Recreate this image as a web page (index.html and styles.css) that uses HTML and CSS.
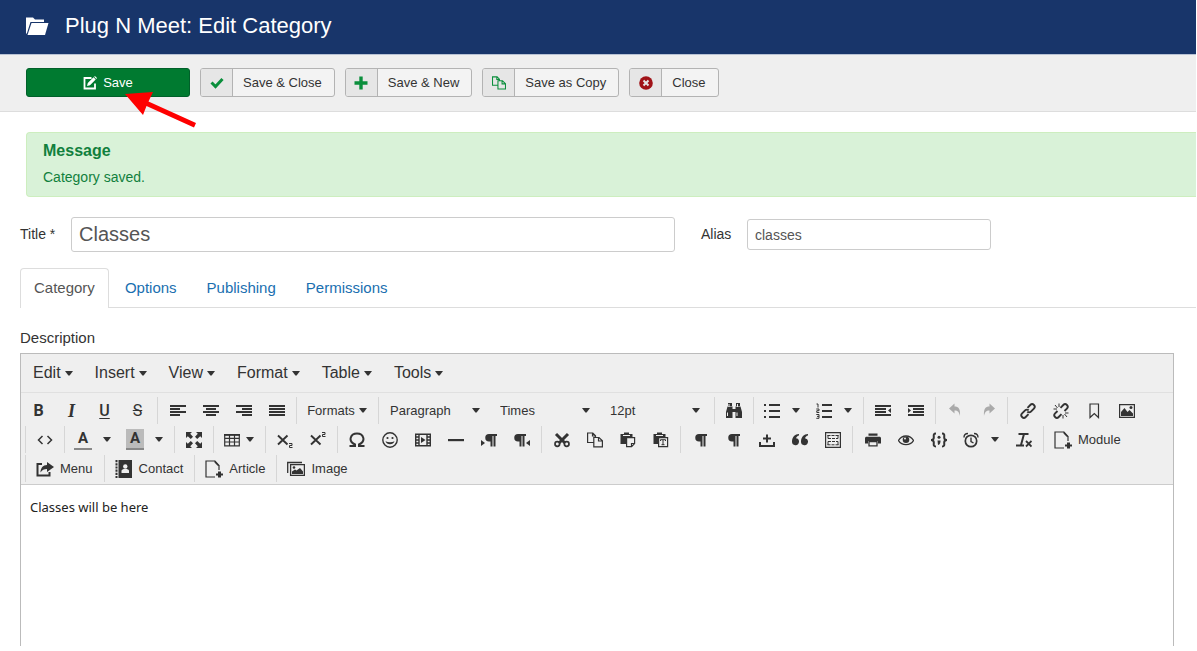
FILE: index.html
```html
<!DOCTYPE html>
<html lang="en">
<head>
<meta charset="utf-8">
<title>Plug N Meet: Edit Category</title>
<link rel="stylesheet" href="styles.css">
</head>
<body>
<svg class="sprite" aria-hidden="true">
  <symbol id="caret" viewBox="0 0 8 5"><path d="M0 0h8L4.600 4.400h-1.200z"/></symbol>
  <symbol id="file-add" viewBox="0 0 18 18"><path d="M14 10V5.500L10 1H1v16h9" fill="none" stroke="currentColor" stroke-width="1.200"/><path d="M9.500 .5l5 5.300h-1.800L9.500 2.500zM13 11.500h3v2h2v2h-2v2h-3v-2h-2v-2h2z"/></symbol>
  <symbol id="copy" viewBox="0 0 16 16"><path d="M6.500 10.500H.6V1h5.200l2.700 2.700V5M5.500 1v3h3M6.800 5.500H12l3.400 3.200v6.200H6.800zM11.500 5.500v3.500h4" fill="none" stroke="currentColor" stroke-width="1.200"/></symbol>
  <symbol id="pilcrow" viewBox="0 0 16 16"><path d="M6 2h8v2h-1.500v10.500h-2V4H9.500v10.500h-2V9.500H6a3.700 3.700 0 0 1 0-7.500z"/></symbol>
</svg>

<header class="header">
  <svg class="header-icon" viewBox="0 0 24 20" aria-hidden="true"><path d="M1 18V1.500h7l2 2h9V6H5.500L2 17z"/><path d="M6.500 7H23.500L20 19H2.500z"/></svg>
  <h1>Plug N Meet: Edit Category</h1>
</header>

<div class="actions">
  <div class="save-wrap">
    <button class="btn btn-save" type="button"><svg class="icon14" viewBox="0 0 14 14" aria-hidden="true"><path d="M8.500 2H1.500v10.500H12V7.500" fill="none" stroke="currentColor" stroke-width="1.800"/><path d="M4 10l.8-3L10.500 1.300 12.700 3.500 7 9.200zM11.200 .7l.7-.7L14 2.100l-.7.8z"/></svg>Save</button>
    <svg class="pointer" viewBox="0 0 72 36" aria-hidden="true"><path d="M0 2L28 0l-4.500 9.500L71 31l-2 4.500L21.500 14 18 23z"/></svg>
  </div>
  <button class="btn" type="button"><span class="btn-icon green"><svg class="icon14" viewBox="0 0 14 14" aria-hidden="true"><path d="M1.500 6.500l4 4L12.500 3" fill="none" stroke="currentColor" stroke-width="3"/></svg></span><span class="btn-text">Save &amp; Close</span></button>
  <button class="btn" type="button"><span class="btn-icon green"><svg class="icon14" viewBox="0 0 14 14" aria-hidden="true"><path d="M5.300 .5h3.400v4.800h4.800v3.400H8.700v4.800H5.300V8.700H.5V5.300h4.800z"/></svg></span><span class="btn-text">Save &amp; New</span></button>
  <button class="btn" type="button"><span class="btn-icon green"><svg class="icon14" aria-hidden="true"><use href="#copy"/></svg></span><span class="btn-text">Save as Copy</span></button>
  <button class="btn" type="button"><span class="btn-icon red"><svg class="icon14" viewBox="0 0 14 14" aria-hidden="true"><circle cx="7" cy="7" r="6.800"/><path d="M4.500 4.500l5 5m0-5l-5 5" stroke="#e6e6e6" stroke-width="2"/></svg></span><span class="btn-text">Close</span></button>
</div>

<main>
  <section class="alert" role="status">
    <h2>Message</h2>
    <p>Category saved.</p>
  </section>

  <form class="fields">
    <label for="title">Title *</label>
    <input class="input-large" id="title" type="text" value="Classes">
    <label class="alias-label" for="alias">Alias</label>
    <input id="alias" type="text" value="classes">
  </form>

  <nav class="tabs">
    <a class="active" href="#category">Category</a>
    <a href="#options">Options</a>
    <a href="#publishing">Publishing</a>
    <a href="#permissions">Permissions</a>
  </nav>

  <section class="description" id="category">
    <h3>Description</h3>
    <div class="editor">
      <div class="menubar">
        <button type="button">Edit<svg class="caret"><use href="#caret"/></svg></button>
        <button type="button">Insert<svg class="caret"><use href="#caret"/></svg></button>
        <button type="button">View<svg class="caret"><use href="#caret"/></svg></button>
        <button type="button">Format<svg class="caret"><use href="#caret"/></svg></button>
        <button type="button">Table<svg class="caret"><use href="#caret"/></svg></button>
        <button type="button">Tools<svg class="caret"><use href="#caret"/></svg></button>
      </div>
      <div class="toolbar">
        <div class="row row-first">
          <div class="group wide">
            <button type="button" aria-label="Bold"><b class="letter">B</b></button>
            <button type="button" aria-label="Italic"><i class="letter serif">I</i></button>
            <button type="button" aria-label="Underline"><span class="letter under">U</span></button>
            <button type="button" aria-label="Strikethrough"><span class="letter strike">S</span></button>
          </div>
          <div class="group wide">
            <button type="button" aria-label="Align left"><svg viewBox="0 0 16 16"><path d="M0 2h16v2H0zM0 5h10v2H0zM0 8h16v2H0zM0 11h10v2H0z"/></svg></button>
            <button type="button" aria-label="Align center"><svg viewBox="0 0 16 16"><path d="M0 2h16v2H0zM3 5h10v2H3zM0 8h16v2H0zM3 11h10v2H3z"/></svg></button>
            <button type="button" aria-label="Align right"><svg viewBox="0 0 16 16"><path d="M0 2h16v2H0zM6 5h10v2H6zM0 8h16v2H0zM6 11h10v2H6z"/></svg></button>
            <button type="button" aria-label="Justify"><svg viewBox="0 0 16 16"><path d="M0 2h16v2H0zM0 5h16v2H0zM0 8h16v2H0zM0 11h16v2H0z"/></svg></button>
          </div>
          <div class="group">
            <button class="formats" type="button">Formats<svg class="caret"><use href="#caret"/></svg></button>
          </div>
          <div class="group">
            <div class="list"><select aria-label="Block format"><option>Paragraph</option></select><svg class="caret"><use href="#caret"/></svg></div>
            <div class="list"><select aria-label="Font family"><option>Times</option></select><svg class="caret"><use href="#caret"/></svg></div>
            <div class="list"><select aria-label="Font size"><option>12pt</option></select><svg class="caret"><use href="#caret"/></svg></div>
          </div>
          <div class="group">
            <button type="button" aria-label="Find and replace"><svg viewBox="0 0 16 16"><path d="M2 0h4v3H2zM10 0h4v3h-4zM1.500 3.500h5V6h3V3.500h5L16 9v6H9.500V9h-3v6H0V9z"/><path d="M1.500 9.500V13M11 9.500V13M3 1v3M11.500 1v3" stroke="#efefef"/></svg></button>
          </div>
          <div class="group">
            <button class="split" type="button" aria-label="Bullet list"><svg viewBox="0 0 16 16"><path d="M5 1h11v2H5zM5 7h11v2H5zM5 13h11v2H5zM0 1h2v2H0zM0 7h2v2H0zM0 13h2v2H0z"/></svg><svg class="caret"><use href="#caret"/></svg></button>
            <button class="split" type="button" aria-label="Numbered list"><svg viewBox="0 0 16 16"><path d="M6 1h10v2H6zM6 7h10v2H6zM6 13h10v2H6z"/><path d="M.5 1H2v3.500M.3 6H3v1.700H.8v1.800H3.300M.3 11.500H3v3.800H.3M1 13.400h2" fill="none" stroke="currentColor"/></svg><svg class="caret"><use href="#caret"/></svg></button>
          </div>
          <div class="group">
            <button type="button" aria-label="Outdent"><svg viewBox="0 0 16 16"><path d="M0 2h16v2H0zM0 5h11v2H0zM0 8h11v2H0zM0 11h16v2H0zM16 5v5l-3-2.500z"/></svg></button>
            <button type="button" aria-label="Indent"><svg viewBox="0 0 16 16"><path d="M0 2h16v2H0zM5 5h11v2H5zM5 8h11v2H5zM0 11h16v2H0zM0 5v5l3-2.500z"/></svg></button>
          </div>
          <div class="group">
            <button class="muted" type="button" aria-label="Undo"><svg viewBox="0 0 16 16"><path d="M2 5.500L7.500 .5v3c4 0 6 2 5.500 9.500C12 9 11 7.500 7.500 7.500v3z"/></svg></button>
            <button class="muted" type="button" aria-label="Redo"><svg viewBox="0 0 16 16"><path d="M15 5.500L9.500 .5v3c-4 0-6 2-5.500 9.500C5 9 6 7.500 9.500 7.500v3z"/></svg></button>
          </div>
          <div class="group wide">
            <button type="button" aria-label="Insert link"><svg viewBox="0 0 16 16"><path d="M7.500 4.800L10.300 2a2.500 2.500 0 0 1 3.600 3.600l-3 3a2.500 2.500 0 0 1-3.600 0M8.500 11.200L5.700 14a2.500 2.500 0 0 1-3.600-3.600l3-3a2.500 2.500 0 0 1 3.600 0" fill="none" stroke="currentColor" stroke-width="1.900"/></svg></button>
            <button type="button" aria-label="Remove link"><svg viewBox="0 0 16 16"><path d="M7.500 4.800L10.300 2a2.500 2.500 0 0 1 3.600 3.600L11.500 8M8.500 11.200L5.700 14a2.500 2.500 0 0 1-3.600-3.600L4.500 8" fill="none" stroke="currentColor" stroke-width="1.900"/><path d="M6 .5V4M2 2l2.500 3M.5 6H4M10 12v3.500M11.500 11l2.500 3M12 10h3.500" stroke="currentColor"/></svg></button>
            <button type="button" aria-label="Anchor"><svg viewBox="0 0 16 16"><path d="M4 1h8.500v13.500L8.300 10.500 4 14.500z" fill="none" stroke="currentColor" stroke-width="1.200"/></svg></button>
            <button type="button" aria-label="Insert image"><svg viewBox="0 0 16 16"><path d="M.6 1.600h14.800v12.800H.6z" fill="none" stroke="currentColor" stroke-width="1.200"/><path d="M2 13V9l3.500-4L8.500 9 10.500 7l3.500 3.500V13z"/><circle cx="12" cy="4.500" r="1.500"/></svg></button>
          </div>
        </div>

        <div class="row">
          <div class="group">
            <button type="button" aria-label="Source code"><svg viewBox="0 0 16 16"><path d="M5.500 4L1.500 8l4 4M10.500 4l4 4-4 4" fill="none" stroke="currentColor" stroke-width="1.500"/></svg></button>
          </div>
          <div class="group">
            <button class="split" type="button" aria-label="Text color"><b class="swatch">A</b><svg class="caret"><use href="#caret"/></svg></button>
            <button class="split" type="button" aria-label="Background color"><b class="swatch fill">A</b><svg class="caret"><use href="#caret"/></svg></button>
          </div>
          <div class="group">
            <button type="button" aria-label="Fullscreen"><svg viewBox="0 0 16 16"><path d="M0 0h6L4.200 1.800 7 4.800 4.800 7 1.800 4.200 0 6zM16 0h-6l1.800 1.800L9 4.800 11.200 7l3-2.800L16 6zM0 16h6l-1.800-1.800L7 11.200 4.800 9l-3 2.800L0 10zM16 16h-6l1.800-1.800L9 11.200 11.200 9l3 2.800L16 10z"/></svg></button>
          </div>
          <div class="group">
            <button class="menu-icon" type="button" aria-label="Table"><svg viewBox="0 0 16 16"><path d="M.7 2.600h14.600v11.300H.7zM1 6.300h14M1 10h14M5.500 3v11M10.500 3v11" fill="none" stroke="currentColor" stroke-width="1.200"/><path d="M0 2h16v1.800H0z"/></svg><svg class="caret"><use href="#caret"/></svg></button>
          </div>
          <div class="group">
            <button type="button" aria-label="Subscript"><svg viewBox="0 0 16 16"><path d="M1 3.500l9.500 9M10.500 3.500l-9.500 9" stroke="currentColor" stroke-width="1.900"/><path d="M12 11.500h3v2h-2.500v2H15.500" fill="none" stroke="currentColor"/></svg></button>
            <button type="button" aria-label="Superscript"><svg viewBox="0 0 16 16"><path d="M1 3.500l9.500 9M10.500 3.500l-9.500 9" stroke="currentColor" stroke-width="1.900"/><path d="M12 .5h3v2h-2.500v2H15.500" fill="none" stroke="currentColor"/></svg></button>
          </div>
          <div class="group">
            <button type="button" aria-label="Special character"><svg viewBox="0 0 16 16"><path d="M.5 14H6v-1.500C-1.500 9 1.500 1.500 8 1.500S17.500 9 10 12.500V14h5.500" fill="none" stroke="currentColor" stroke-width="2"/></svg></button>
            <button type="button" aria-label="Emoticons"><svg viewBox="0 0 16 16"><circle cx="8" cy="8" r="7.200" fill="none" stroke="currentColor" stroke-width="1.400"/><circle cx="5.500" cy="6" r="1.100"/><circle cx="10.500" cy="6" r="1.100"/><path d="M3.500 9.200c1 4 8 4 9 0-2.500 1.500-6.500 1.500-9 0z"/></svg></button>
            <button type="button" aria-label="Insert video"><svg viewBox="0 0 16 16"><path d="M.7 2.200h14.600v11.600H.7zM4 2v12M12 2v12M1 5h3M1 8h3M1 11h3M12 5h3M12 8h3M12 11h3" fill="none" stroke="currentColor" stroke-width="1.400"/><path d="M6 5v6l4.500-3z"/></svg></button>
            <button type="button" aria-label="Horizontal line"><svg viewBox="0 0 16 16"><path d="M0 7h16v2.200H0z"/></svg></button>
            <button type="button" aria-label="Left to right"><svg viewBox="0 0 16 16"><use href="#pilcrow" x="2" width="16" height="16"/><path d="M0 8v6l4-3z"/></svg></button>
            <button type="button" aria-label="Right to left"><svg viewBox="0 0 16 16"><use href="#pilcrow" x="-2" width="16" height="16"/><path d="M16 8v6l-4-3z"/></svg></button>
          </div>
          <div class="group wide">
            <button type="button" aria-label="Cut"><svg viewBox="0 0 16 16"><path d="M2 2l9 9M14 2l-9 9" stroke="currentColor" stroke-width="3"/><circle cx="3.300" cy="12" r="2.300" fill="none" stroke="currentColor" stroke-width="1.700"/><circle cx="12.700" cy="12" r="2.300" fill="none" stroke="currentColor" stroke-width="1.700"/></svg></button>
            <button type="button" aria-label="Copy"><svg><use href="#copy"/></svg></button>
            <button type="button" aria-label="Paste"><svg viewBox="0 0 16 16"><path d="M.5 2H4V.5h5V2h3.500v3H6v7H.5z"/><path d="M3 3.500h7" stroke="#efefef"/><path d="M6.600 5.600h8v6l-3 3h-5zM11.500 14.500v-3h3" fill="none" stroke="currentColor" stroke-width="1.200"/></svg></button>
            <button type="button" aria-label="Paste as text"><svg viewBox="0 0 16 16"><path d="M.5 2H4V.5h5V2h3.500v3H5v7H.5z"/><path d="M3 3.500h7" stroke="#efefef"/><path d="M5.600 5.600h9v9h-9z" fill="none" stroke="currentColor" stroke-width="1.200"/><path d="M7.500 9V7.700h5V9M10 8v5M8.500 12.700h3" fill="none" stroke="currentColor"/></svg></button>
          </div>
          <div class="group wide">
            <button type="button" aria-label="Show blocks"><svg><use href="#pilcrow"/></svg></button>
            <button type="button" aria-label="Show invisible characters"><svg><use href="#pilcrow"/></svg></button>
            <button type="button" aria-label="Nonbreaking space"><svg viewBox="0 0 16 16"><path d="M1 10v4h14v-4" fill="none" stroke="currentColor" stroke-width="2"/><path d="M7 2.500h2v3h3v2H9v3H7v-3H4v-2h3z"/></svg></button>
            <button type="button" aria-label="Blockquote"><svg viewBox="0 0 16 16"><path d="M7 2C3 2 0 5 0 9.500A3.500 3.500 0 1 0 4 6.200C4.500 4.500 5.500 3.700 7 3.400zM16 2c-4 0-7 3-7 7.500a3.500 3.500 0 1 0 4-3.300c.5-1.700 1.500-2.500 3-2.800z"/></svg></button>
            <button type="button" aria-label="Template"><svg viewBox="0 0 16 16"><path d="M.6 .6h14.800v14.800H.6z" fill="none" stroke="currentColor" stroke-width="1.200"/><path d="M2.500 3.500h11M3 6.500h10M3 9.500h10M2.500 12.800h11" stroke="currentColor" stroke-dasharray="3 1"/><path d="M3 3v3.500M13 3v3.500M3 9.500V13M13 9.500V13" stroke="currentColor"/></svg></button>
          </div>
          <div class="group wide">
            <button type="button" aria-label="Print"><svg viewBox="0 0 16 16"><path d="M3.500 1.500h9v2.300h-9zM1 4.800h14l1 1v5.700h-3V9H3v2.500H0V5.800z"/><path d="M4 9.500h8v4.300H4z" fill="none" stroke="currentColor" stroke-width="1.300"/></svg></button>
            <button type="button" aria-label="Preview"><svg viewBox="0 0 16 16"><path d="M.5 8.500C4 2.500 12 2.500 15.500 8.500 12 14 4 14 .5 8.500z" fill="none" stroke="currentColor" stroke-width="1.300"/><circle cx="8" cy="7.800" r="3.300"/><circle cx="7" cy="6.500" r="1" fill="#efefef"/></svg></button>
            <button type="button" aria-label="Code sample"><svg class="icon18" viewBox="0 0 18 16"><path d="M6 1.500C3 1.500 3.800 3.500 3.800 5.500S3 8 1 8c2 0 2.800.5 2.800 2.500S3 14.500 6 14.500M12 1.500c3 0 2.200 2 2.200 4S15 8 17 8c-2 0-2.800.5-2.800 2.500s.8 4-2.200 4" fill="none" stroke="currentColor" stroke-width="2"/><circle cx="9" cy="5.300" r="1.500"/><path d="M7.500 8.500h3c0 2.500-.5 4-2.500 4.500z"/></svg></button>
            <button class="split" type="button" aria-label="Insert date"><svg viewBox="0 0 16 16"><circle cx="8" cy="9" r="5.700" fill="none" stroke="currentColor" stroke-width="1.700"/><path d="M8 5.500V9.500l2.500 1.500M1 5.500C1 3 2.500 1.500 5 1.500M15 5.500c0-2.500-1.500-4-4-4" fill="none" stroke="currentColor" stroke-width="1.400"/></svg><svg class="caret"><use href="#caret"/></svg></button>
            <button type="button" aria-label="Clear formatting"><svg viewBox="0 0 16 16"><path d="M2.500 2h10M8 2L5 13M0 13.600h8" fill="none" stroke="currentColor" stroke-width="2"/><path d="M10 9l5.500 5.500m0-5.500L10 14.500" stroke="currentColor" stroke-width="1.800"/></svg></button>
          </div>
          <div class="group">
            <button class="labelled" type="button"><svg class="icon18"><use href="#file-add"/></svg>Module</button>
          </div>
        </div>

        <div class="row">
          <div class="group">
            <button class="labelled" type="button"><svg class="icon18" viewBox="0 0 18 18"><path d="M6 4H1.500v11.500h12V12" fill="none" stroke="currentColor" stroke-width="2"/><path d="M11 2l7 5-7 5V9C8 9 6 10 4.500 12.500 4.500 8 7 5 11 5z"/></svg>Menu</button>
          </div>
          <div class="group">
            <button class="labelled" type="button"><svg class="icon18" viewBox="0 0 18 18"><path d="M3.500 0H17v18H3.500z"/><path d="M1.500 0v18" stroke="currentColor" stroke-width="2" stroke-dasharray="2.200 1"/><circle cx="10.300" cy="6.500" r="2.200" fill="#efefef"/><path d="M6.500 13V11c0-1.500 1.500-2 3.800-2s3.700.5 3.700 2v2z" fill="#efefef"/></svg>Contact</button>
          </div>
          <div class="group">
            <button class="labelled" type="button"><svg class="icon18"><use href="#file-add"/></svg>Article</button>
          </div>
          <div class="group">
            <button class="labelled" type="button"><svg class="icon18" viewBox="0 0 18 18"><path d="M.7 13V2.500H15M3.600 4.600h13.800v10.800H3.600z" fill="none" stroke="currentColor" stroke-width="1.300"/><path d="M5 14v-2.500l3-2 1.500 1L13 8l3 3.500V14z"/><circle cx="7" cy="7.500" r="1.300"/></svg>Image</button>
          </div>
        </div>
      </div>
      <div class="canvas" contenteditable="true" aria-label="Description">Classes will be here</div>
    </div>
  </section>
</main>
</body>
</html>
```

FILE: styles.css
```css
* { box-sizing: border-box; }

body {
  margin: 0;
  min-height: 100vh;
  padding: 0 1px 5px 0;
  display: flex;
  flex-direction: column;
  overflow-x: hidden;
  background: #fff;
  color: #333;
  font: 15px/20px "Liberation Sans", Arial, sans-serif;
}

h1, h2, h3, p { margin: 0; }
button, input, select { margin: 0; font-family: inherit; color: inherit; }
button { padding: 0; border: 0; background: none; }
svg { flex: none; fill: currentColor; }
.sprite { position: absolute; width: 0; height: 0; }

.header {
  display: flex;
  align-items: center;
  gap: 16px;
  height: 55px;
  padding: 0 25px 3px;
  border-bottom: 1px solid #b8c2d4;
  background: #18356a;
  color: #fff;
}
.header h1 { font-size: 22px; line-height: 28px; font-weight: 400; }
.header-icon { width: 24px; height: 20px; }

.actions {
  display: flex;
  gap: 10px;
  padding: 13px 26px 14px;
  border-bottom: 1px solid #ddd;
  background: #efefef;
}
.btn {
  display: flex;
  align-items: stretch;
  height: 29px;
  border: 1px solid #b3b3b3;
  border-radius: 3px;
  background: #f3f3f3;
  font-size: 13px;
  line-height: 28px;
  overflow: hidden;
}
.btn-icon {
  display: flex;
  align-items: center;
  justify-content: center;
  width: 32px;
  border-right: 1px solid #b3b3b3;
  background: #e6e6e6;
}
.btn-text { padding: 0 12px 0 10px; }
.icon14 { width: 14px; height: 14px; }
.green { color: #0b8f3c; }
.red { color: #a01318; }
.save-wrap { position: relative; }
.btn-save {
  width: 164px;
  align-items: center;
  justify-content: center;
  gap: 6px;
  border-color: #00602a;
  background: #007a30;
  color: #fff;
}
.pointer {
  position: absolute;
  left: 99px;
  top: 24px;
  width: 72px;
  height: 36px;
  fill: #fe0000;
}

main { flex: 1; display: flex; flex-direction: column; }
.alert {
  margin: 20px 0 20px 26px;
  padding: 7px 16px 9px;
  border: 1px solid #cdeebf;
  border-right: 0;
  border-radius: 4px 0 0 4px;
  background: #d9f2d8;
  color: #11803d;
}
.alert h2 { font-size: 16px; line-height: 22px; }
.alert p { font-size: 14px; line-height: 20px; padding-top: 5px; }

.fields {
  display: grid;
  grid-template-columns: 51px 604fr 72px 244fr 205fr;
  align-items: center;
  padding-left: 20px;
  font-size: 14px;
}
.fields input {
  min-width: 0;
  height: 31px;
  padding: 0 7px;
  border: 1px solid #ccc;
  border-radius: 3px;
  background: #fff;
  color: #555;
  font-size: 14px;
}
.fields .input-large { height: 35px; font-size: 20px; }
.fields label { padding-bottom: 2px; }
.alias-label { padding-left: 26px; }

.tabs {
  display: flex;
  gap: 2px;
  margin: 16px 0 0 20px;
  border-bottom: 1px solid #ddd;
}
.tabs a {
  padding: 9px 13px;
  border: 1px solid transparent;
  border-bottom: 0;
  border-radius: 4px 4px 0 0;
  color: #1a6fb0;
  text-decoration: none;
}
.tabs .active {
  margin-bottom: -1px;
  padding-bottom: 10px;
  border-color: #ddd;
  background: #fff;
  color: #555;
}

.description {
  flex: 1;
  display: flex;
  flex-direction: column;
  padding: 20px 22px 0 20px;
}
.description h3 { font-size: 15px; font-weight: 400; }
.editor {
  flex: 1;
  display: flex;
  flex-direction: column;
  margin-top: 5px;
  border: 1px solid #bbb;
  border-bottom: 0;
}
.menubar {
  display: flex;
  padding-left: 1px;
  border-bottom: 1px solid #e0e0e0;
  background: #efefef;
}
.menubar button {
  display: flex;
  align-items: center;
  gap: 4px;
  height: 38px;
  padding: 0 11px;
  font-size: 16px;
}
.caret { width: 8px; height: 5px; }

.toolbar {
  padding: 3px 0 1px;
  border-bottom: 1px solid #ccc;
  background: #efefef;
}
.row { display: flex; padding-left: 4px; height: 29px; }
.row-first { padding-left: 0; }
.group {
  display: flex;
  align-items: center;
  height: 27px;
  margin-top: 1px;
  padding: 0 3px 0 2px;
  border-left: 1px solid #d6d6d6;
}
.wide { padding: 0 3px; }
.row-first .group:first-child { padding-left: 0; border-left-color: transparent; }
.group button {
  display: flex;
  align-items: center;
  justify-content: center;
  width: 33px;
  height: 27px;
  font-size: 13px;
}
.group svg { width: 16px; height: 16px; }
.group .caret { width: 8px; height: 5px; }
.group .icon18 { width: 18px; height: 18px; }
.group .split { width: 52px; gap: 12px; }
.group .menu-icon { width: 46px; gap: 6px; }
.group .formats { width: 76px; gap: 4px; }
.group .labelled { width: auto; gap: 6px; padding: 0 8px; }
.group .muted { color: #aaa; }

.letter { font: 700 16px/16px Roboto, sans-serif; }
.serif { font: italic 700 18px/18px "Liberation Serif", serif; }
.under { font-weight: 500; text-decoration: underline; text-underline-offset: 2px; }
.strike { font-weight: 400; text-decoration: line-through; }
.swatch {
  width: 18px;
  margin: 0 -1px;
  border-bottom: 2px solid #888;
  font: 700 15px/19px Roboto, sans-serif;
  text-align: center;
}
.fill { background: #bbb; background-clip: padding-box; }

.list { display: grid; width: 110px; align-items: center; }
.list select {
  grid-area: 1 / 1;
  width: 100%;
  height: 27px;
  padding: 0 9px;
  border: 0;
  appearance: none;
  background: none;
  font-size: 13px;
}
.list .caret {
  grid-area: 1 / 1;
  justify-self: end;
  margin-right: 11px;
  pointer-events: none;
}

.canvas {
  flex: 1;
  padding: 12px 9px;
  outline: 0;
  color: #222;
  font: 13px/20px "Noto Sans", "DejaVu Sans", sans-serif;
}
```
